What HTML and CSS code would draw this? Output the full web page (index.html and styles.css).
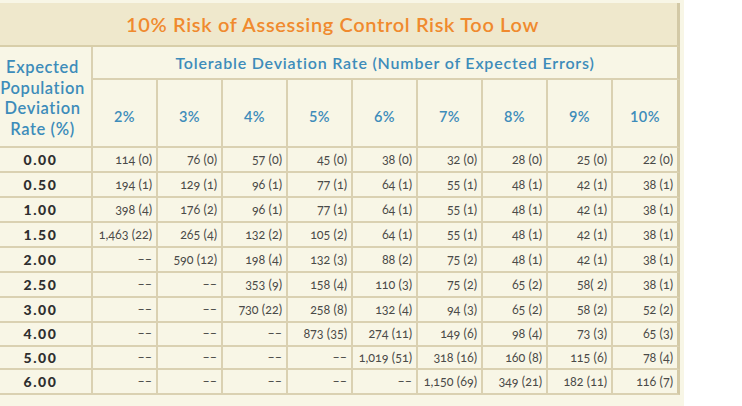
FILE: index.html
```html
<!DOCTYPE html>
<html>
<head>
<meta charset="utf-8">
<link rel="stylesheet" href="styles.css">
</head>
<body>
<div class="sheet">
  <div class="grid">
    <div class="title">10% Risk of Assessing Control Risk Too Low</div>
    <div class="stub">Expected<br>Population<br>Deviation<br>Rate (%)</div>
    <div class="tol">Tolerable Deviation Rate (Number of Expected Errors)</div>
    <div class="pct">2%</div><div class="pct">3%</div><div class="pct">4%</div><div class="pct">5%</div><div class="pct">6%</div><div class="pct">7%</div><div class="pct">8%</div><div class="pct">9%</div><div class="pct last">10%</div>

    <div class="lab">0.00</div><div class="c">114 (0)</div><div class="c">76 (0)</div><div class="c">57 (0)</div><div class="c">45 (0)</div><div class="c">38 (0)</div><div class="c">32 (0)</div><div class="c">28 (0)</div><div class="c">25 (0)</div><div class="c last">22 (0)</div>
    <div class="lab">0.50</div><div class="c">194 (1)</div><div class="c">129 (1)</div><div class="c">96 (1)</div><div class="c">77 (1)</div><div class="c">64 (1)</div><div class="c">55 (1)</div><div class="c">48 (1)</div><div class="c">42 (1)</div><div class="c last">38 (1)</div>
    <div class="lab">1.00</div><div class="c">398 (4)</div><div class="c">176 (2)</div><div class="c">96 (1)</div><div class="c">77 (1)</div><div class="c">64 (1)</div><div class="c">55 (1)</div><div class="c">48 (1)</div><div class="c">42 (1)</div><div class="c last">38 (1)</div>
    <div class="lab">1.50</div><div class="c">1,463 (22)</div><div class="c">265 (4)</div><div class="c">132 (2)</div><div class="c">105 (2)</div><div class="c">64 (1)</div><div class="c">55 (1)</div><div class="c">48 (1)</div><div class="c">42 (1)</div><div class="c last">38 (1)</div>
    <div class="lab">2.00</div><div class="c">&ndash;&ndash;</div><div class="c">590 (12)</div><div class="c">198 (4)</div><div class="c">132 (3)</div><div class="c">88 (2)</div><div class="c">75 (2)</div><div class="c">48 (1)</div><div class="c">42 (1)</div><div class="c last">38 (1)</div>
    <div class="lab">2.50</div><div class="c">&ndash;&ndash;</div><div class="c">&ndash;&ndash;</div><div class="c">353 (9)</div><div class="c">158 (4)</div><div class="c">110 (3)</div><div class="c">75 (2)</div><div class="c">65 (2)</div><div class="c">58( 2)</div><div class="c last">38 (1)</div>
    <div class="lab">3.00</div><div class="c">&ndash;&ndash;</div><div class="c">&ndash;&ndash;</div><div class="c">730 (22)</div><div class="c">258 (8)</div><div class="c">132 (4)</div><div class="c">94 (3)</div><div class="c">65 (2)</div><div class="c">58 (2)</div><div class="c last">52 (2)</div>
    <div class="lab">4.00</div><div class="c">&ndash;&ndash;</div><div class="c">&ndash;&ndash;</div><div class="c">&ndash;&ndash;</div><div class="c">873 (35)</div><div class="c">274 (11)</div><div class="c">149 (6)</div><div class="c">98 (4)</div><div class="c">73 (3)</div><div class="c last">65 (3)</div>
    <div class="lab">5.00</div><div class="c">&ndash;&ndash;</div><div class="c">&ndash;&ndash;</div><div class="c">&ndash;&ndash;</div><div class="c">&ndash;&ndash;</div><div class="c">1,019 (51)</div><div class="c">318 (16)</div><div class="c">160 (8)</div><div class="c">115 (6)</div><div class="c last">78 (4)</div>
    <div class="lab">6.00</div><div class="c">&ndash;&ndash;</div><div class="c">&ndash;&ndash;</div><div class="c">&ndash;&ndash;</div><div class="c">&ndash;&ndash;</div><div class="c">&ndash;&ndash;</div><div class="c">1,150 (69)</div><div class="c">349 (21)</div><div class="c">182 (11)</div><div class="c last">116 (7)</div>
  </div>
</div>
</body>
</html>
```
FILE: styles.css
```css
html, body {
  margin: 0;
  padding: 0;
  background: #ffffff;
}
.sheet {
  width: 684px;
  height: 406px;
  box-sizing: border-box;
  padding-top: 3px;
  background: #f8f6e6;
  font-family: Lato, "Noto Sans", sans-serif;
}
.grid {
  display: grid;
  width: 680px;
  grid-template-columns: 93px repeat(8, 65px) 67px;
  grid-template-rows: 44px 33px 68px 25px 25px 25px 25px 25px 25px 25px 23.5px 23.5px 25px;
}
.grid > div {
  box-sizing: border-box;
  border-right: 2px solid #dad1b2;
  border-bottom: 2px solid #dad1b2;
  display: flex;
  align-items: center;
}
.grid > .last {
  border-right-width: 3px;
  border-right-color: #d3c9a6;
}
.title {
  grid-column: 1 / -1;
  background: #efe8cc;
  justify-content: center;
  color: #f08a2e;
  font-size: 20px;
  font-weight: 600;
  letter-spacing: 0.65px;
  border-bottom-color: #d8cea9 !important;
  border-right: 3px solid #d3c9a6 !important;
  padding-right: 12px;
}
.stub {
  grid-row: 2 / 4;
  justify-content: center;
  text-align: center;
  color: #3d8cba;
  font-size: 16.5px;
  font-weight: 600;
  letter-spacing: 0.6px;
  line-height: 20.5px;
  padding-right: 6px;
  padding-top: 3px;
  white-space: nowrap;
}
.tol {
  grid-column: 2 / -1;
  justify-content: center;
  color: #3d8cba;
  font-size: 16px;
  font-weight: 600;
  letter-spacing: 0.8px;
  border-right: 3px solid #d3c9a6 !important;
}
.pct {
  justify-content: center;
  color: #3d8cba;
  font-size: 14.5px;
  font-weight: 600;
  letter-spacing: 0.5px;
  padding-top: 6px;
}
.lab {
  justify-content: center;
  padding-right: 10px;
  font-size: 14px;
  font-weight: 900;
  color: #2f2f2f;
  letter-spacing: 1.6px;
}
.c {
  justify-content: flex-end;
  padding-right: 4px;
  font-size: 12.5px;
  color: #4a4a48;
  font-variant-numeric: oldstyle-nums;
  white-space: nowrap;
}
```
